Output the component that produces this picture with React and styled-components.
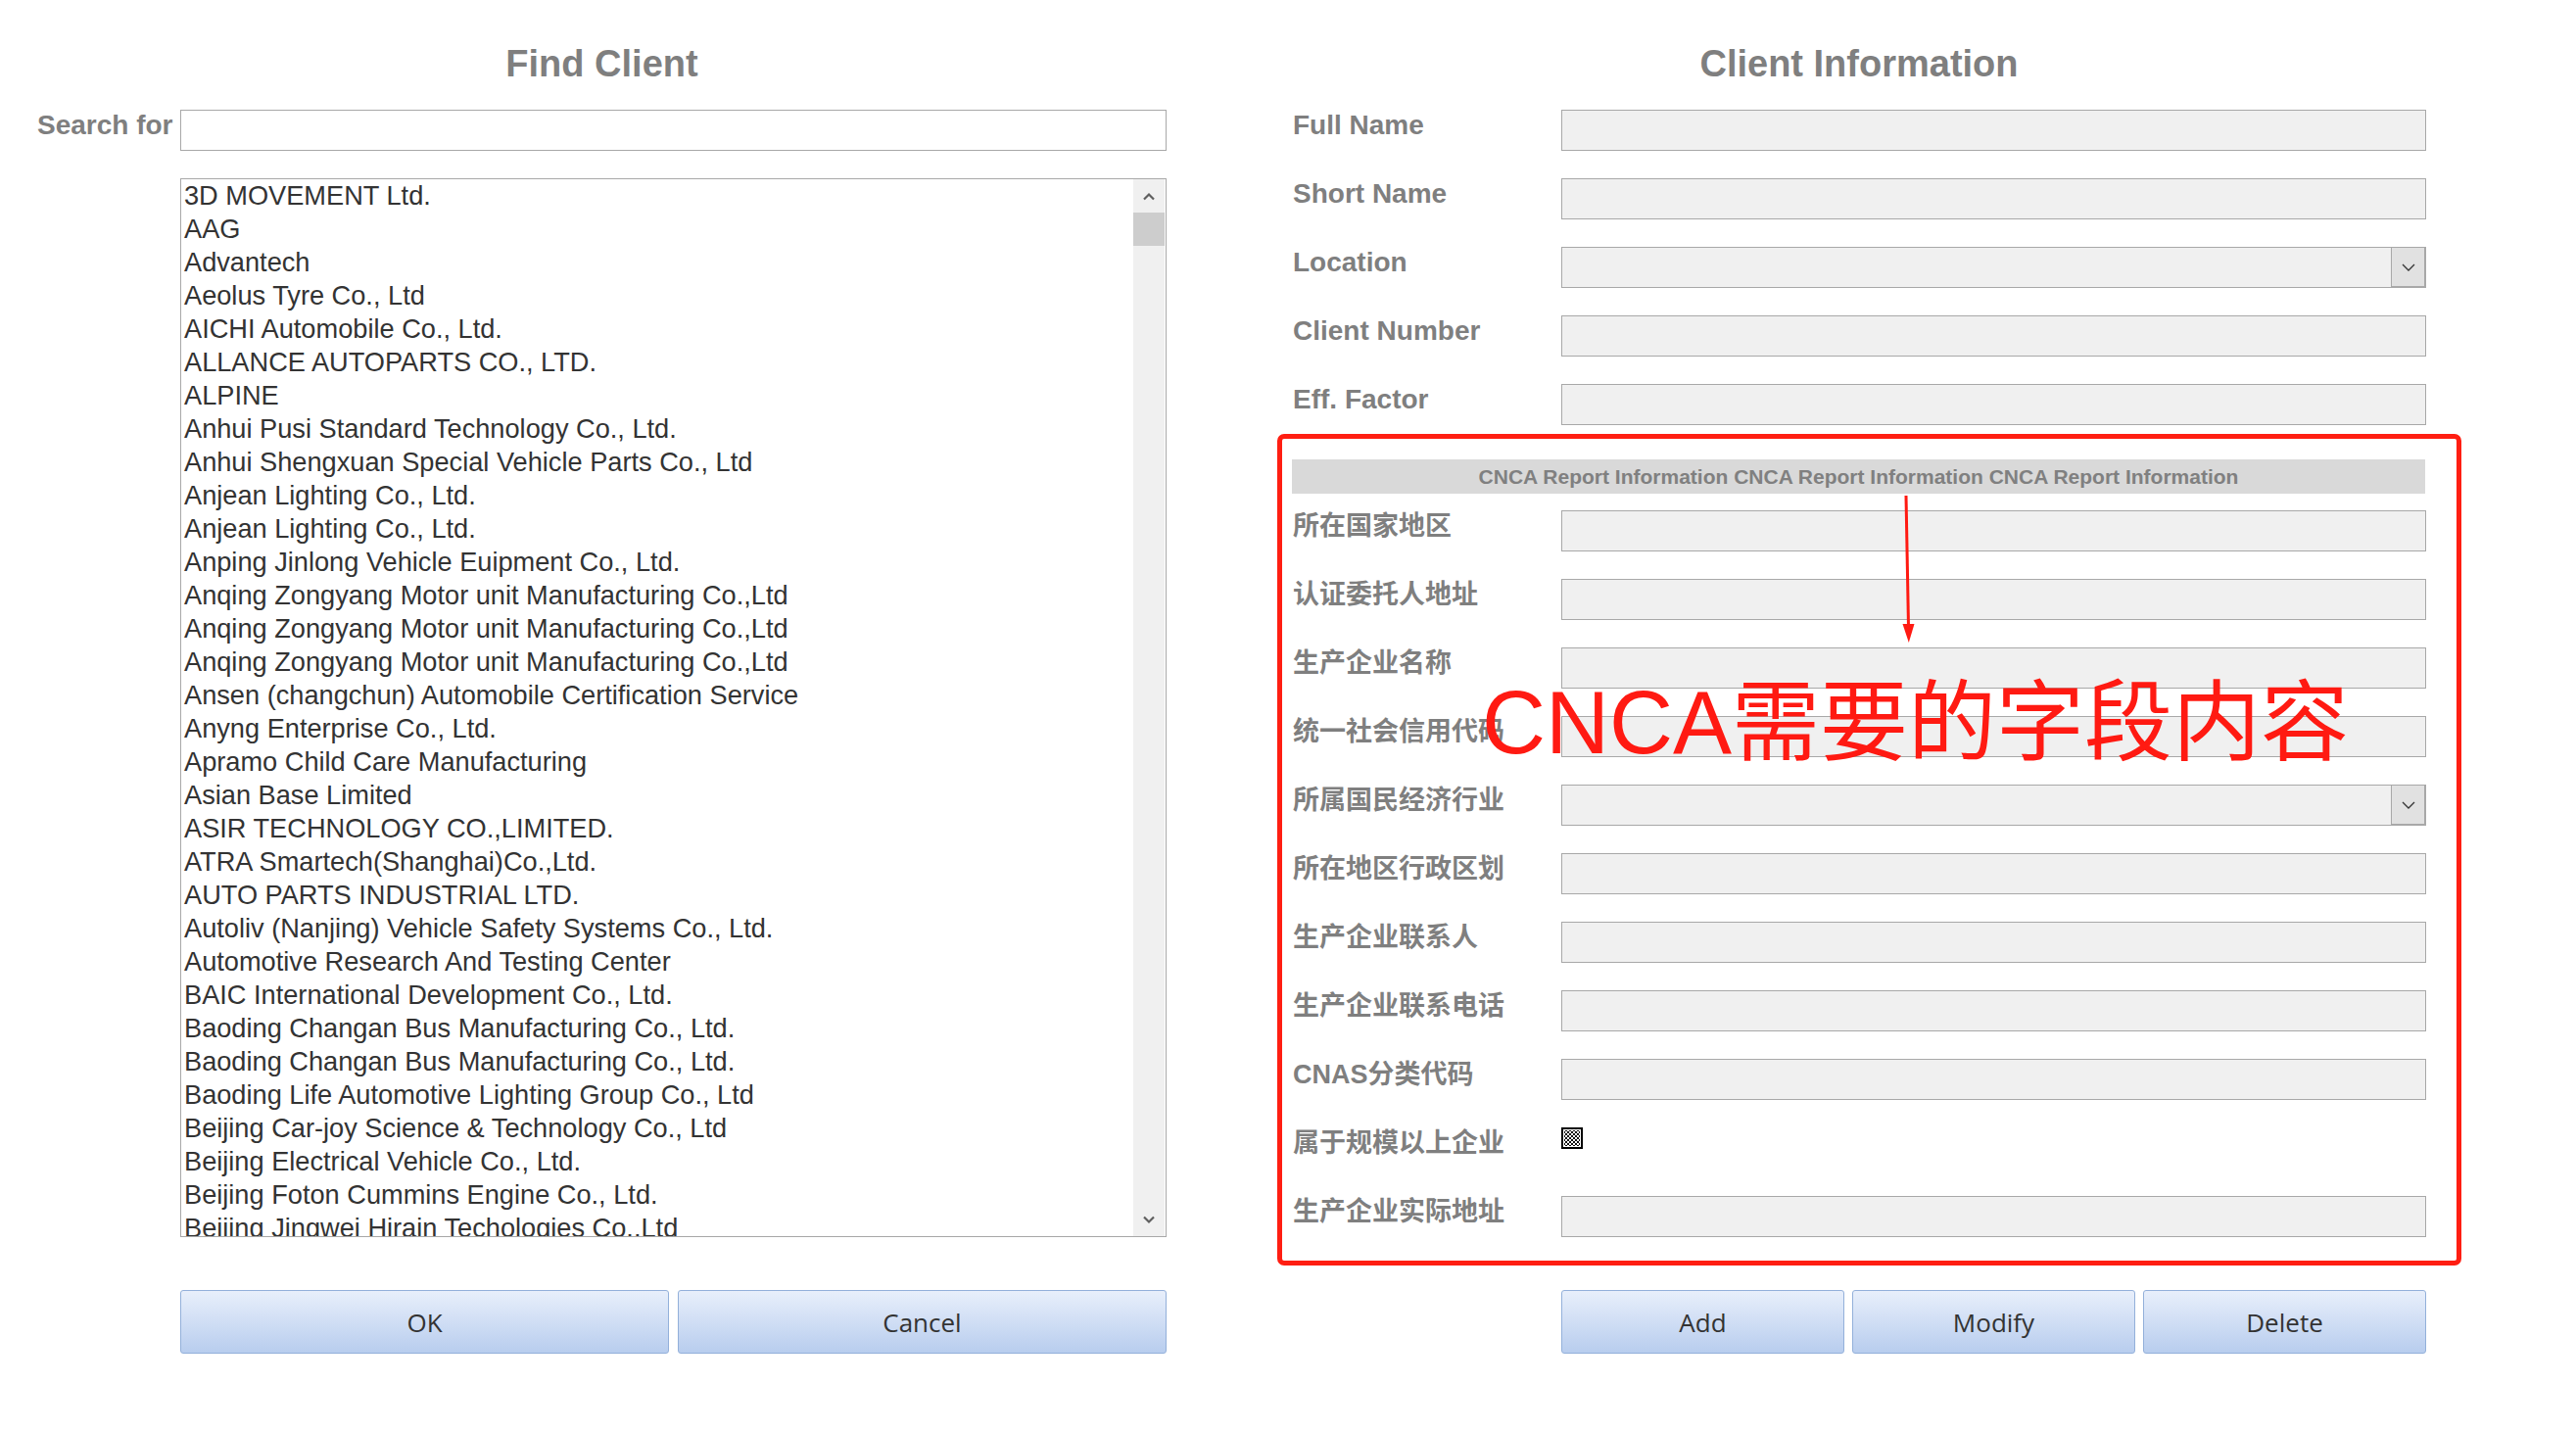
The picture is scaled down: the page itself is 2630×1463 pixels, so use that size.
import React from "react";
import styled, { createGlobalStyle } from "styled-components";

const clients = [
  "3D MOVEMENT Ltd.",
  "AAG",
  "Advantech",
  "Aeolus Tyre Co., Ltd",
  "AICHI Automobile Co., Ltd.",
  "ALLANCE AUTOPARTS CO., LTD.",
  "ALPINE",
  "Anhui Pusi Standard Technology Co., Ltd.",
  "Anhui Shengxuan Special Vehicle Parts Co., Ltd",
  "Anjean Lighting Co., Ltd.",
  "Anjean Lighting Co., Ltd.",
  "Anping Jinlong Vehicle Euipment Co., Ltd.",
  "Anqing Zongyang Motor unit Manufacturing Co.,Ltd",
  "Anqing Zongyang Motor unit Manufacturing Co.,Ltd",
  "Anqing Zongyang Motor unit Manufacturing Co.,Ltd",
  "Ansen (changchun) Automobile Certification Service",
  "Anyng Enterprise Co., Ltd.",
  "Apramo Child Care Manufacturing",
  "Asian Base Limited",
  "ASIR TECHNOLOGY CO.,LIMITED.",
  "ATRA Smartech(Shanghai)Co.,Ltd.",
  "AUTO PARTS INDUSTRIAL LTD.",
  "Autoliv (Nanjing) Vehicle Safety Systems Co., Ltd.",
  "Automotive Research And Testing Center",
  "BAIC International Development Co., Ltd.",
  "Baoding Changan Bus Manufacturing Co., Ltd.",
  "Baoding Changan Bus Manufacturing Co., Ltd.",
  "Baoding Life Automotive Lighting Group Co., Ltd",
  "Beijing Car-joy Science & Technology Co., Ltd",
  "Beijing Electrical Vehicle Co., Ltd.",
  "Beijing Foton Cummins Engine Co., Ltd.",
  "Beijing Jingwei Hirain Techologies Co.,Ltd",
  "Beijing Hyundai Motor Company",
  "Beijing Tianhai Industry Co., Ltd.",
];

const basicFields = [
  { label: "Full Name" },
  { label: "Short Name" },
  { label: "Location", select: true },
  { label: "Client Number" },
  { label: "Eff. Factor" },
];

const cncaFields = [
  { label: "所在国家地区" },
  { label: "认证委托人地址" },
  { label: "生产企业名称" },
  { label: "统一社会信用代码" },
  { label: "所属国民经济行业", select: true },
  { label: "所在地区行政区划" },
  { label: "生产企业联系人" },
  { label: "生产企业联系电话" },
  { label: "CNAS分类代码" },
  { label: "属于规模以上企业", check: true },
  { label: "生产企业实际地址" },
];

export default function App() {
  return (
    <>
      <GlobalStyle />
      <Page>
        <Column $width={1153}>
          <Title>Find Client</Title>
          <SearchRow>
            <SearchLabel>Search for</SearchLabel>
            <SearchInput type="text" />
          </SearchRow>
          <ListBox>
            <ListItems>
              {clients.map((name, i) => (
                <ListItem key={`${name}-${i}`}>{name}</ListItem>
              ))}
            </ListItems>
            <Scrollbar>
              <ScrollArrow>
                <svg width="12" height="9" viewBox="0 0 12 9">
                  <polyline points="1,7.5 6,2.5 11,7.5" fill="none" stroke="#5f5f5f" strokeWidth="2.2" />
                </svg>
              </ScrollArrow>
              <ScrollTrack>
                <ScrollThumb />
              </ScrollTrack>
              <ScrollArrow>
                <svg width="12" height="9" viewBox="0 0 12 9">
                  <polyline points="1,1.5 6,6.5 11,1.5" fill="none" stroke="#5f5f5f" strokeWidth="2.2" />
                </svg>
              </ScrollArrow>
            </Scrollbar>
          </ListBox>
          <ButtonRow $indent={146} $gap={9} $top={54}>
            <Button>OK</Button>
            <Button>Cancel</Button>
          </ButtonRow>
        </Column>

        <Column $width={1158} $left={128}>
          <Title>Client Information</Title>
          <FieldList>
            {basicFields.map(f => (
              <Field key={f.label} {...f} />
            ))}
          </FieldList>
          <CncaSection>
            <SectionHeader>
              CNCA Report Information CNCA Report Information CNCA Report Information
            </SectionHeader>
            <FieldList>
              {cncaFields.map(f => (
                <Field key={f.label} cjk {...f} />
              ))}
            </FieldList>
            <ArrowMark width="20" height="152" viewBox="0 0 20 152">
              <line x1="9" y1="0" x2="11.5" y2="134" stroke="#ff1a12" strokeWidth="3" />
              <polygon points="5.5,131 17.5,131 11.8,150" fill="#ff1a12" />
            </ArrowMark>
            <Annotation>
              <Latin>CNCA</Latin>需要的字段内容
            </Annotation>
          </CncaSection>
          <ButtonRow $indent={275} $gap={8} $top={25}>
            <Button>Add</Button>
            <Button>Modify</Button>
            <Button>Delete</Button>
          </ButtonRow>
        </Column>
      </Page>
    </>
  );
}

function Field({ label, select, check, cjk }) {
  return (
    <FieldRow>
      <FieldLabel $cjk={cjk}>{label}</FieldLabel>
      {check ? (
        <CheckBox />
      ) : select ? (
        <SelectField>
          <SelectButton>
            <svg width="14" height="8" viewBox="0 0 14 8">
              <polyline points="1,1 7,7 13,1" fill="none" stroke="#333" strokeWidth="1.3" />
            </svg>
          </SelectButton>
        </SelectField>
      ) : (
        <TextField type="text" readOnly />
      )}
    </FieldRow>
  );
}

const GlobalStyle = createGlobalStyle`
  html, body {
    margin: 0;
    padding: 0;
    background: #fff;
    overflow: hidden;
  }

  body {
    font-family: "Liberation Sans", Arial, "Noto Sans CJK SC", sans-serif;
  }
`;

const Page = styled.div`
  align-items: flex-start;
  box-sizing: border-box;
  display: flex;
  height: 1463px;
  padding: 43px 0 0 38px;
  width: 2630px;
`;

const Column = styled.div`
  display: flex;
  flex-direction: column;
  flex: none;
  margin-left: ${props => props.$left || 0}px;
  width: ${props => props.$width}px;
`;

const Title = styled.h2`
  color: #7f7f7f;
  font-size: 38px;
  font-weight: bold;
  line-height: 44px;
  margin: 0 0 25px;
  text-align: center;
`;

const SearchRow = styled.div`
  align-items: flex-start;
  display: flex;
`;

const SearchLabel = styled.label`
  color: #7f7f7f;
  font-size: 28px;
  font-weight: bold;
  line-height: 32px;
  margin-right: 11px;
  width: 135px;
  white-space: nowrap;
`;

const SearchInput = styled.input`
  background: #fff;
  border: 1px solid #a8a8a8;
  box-sizing: border-box;
  flex: 1;
  height: 42px;
  margin: 0;
  outline: none;
`;

const ListBox = styled.div`
  background: #fff;
  border: 1px solid #a8a8a8;
  box-sizing: border-box;
  display: flex;
  height: 1081px;
  margin: 28px 0 0 146px;
`;

const ListItems = styled.div`
  flex: 1;
  overflow: hidden;
  padding-left: 3px;
`;

const ListItem = styled.div`
  color: #333;
  font-size: 27.2px;
  line-height: 34px;
  white-space: nowrap;
`;

const Scrollbar = styled.div`
  background: #f0f0f0;
  display: flex;
  flex-direction: column;
  margin-right: 1px;
  width: 32px;
`;

const ScrollArrow = styled.div`
  align-items: center;
  display: flex;
  height: 34px;
  justify-content: center;
`;

const ScrollTrack = styled.div`
  flex: 1;
`;

const ScrollThumb = styled.div`
  background: #cdcdcd;
  height: 34px;
`;

const ButtonRow = styled.div`
  display: flex;
  gap: ${props => props.$gap}px;
  margin: ${props => props.$top}px 0 0 ${props => props.$indent}px;
`;

const Button = styled.button`
  background: linear-gradient(#e8effb, #b8cdee);
  border: 1px solid #93b0da;
  border-radius: 3px;
  color: #333;
  cursor: pointer;
  flex: 1;
  font-family: "Open Sans", "Noto Sans", sans-serif;
  font-size: 26px;
  height: 65px;
  padding: 0;
`;

const FieldList = styled.div`
  display: flex;
  flex-direction: column;
  gap: 28px;
`;

const FieldRow = styled.div`
  align-items: flex-start;
  display: flex;
  height: 42px;
`;

const FieldLabel = styled.label`
  color: #7f7f7f;
  flex: none;
  font-family: "Liberation Sans", Arial, "Noto Sans CJK SC", sans-serif;
  font-size: ${props => (props.$cjk ? 27 : 28)}px;
  font-weight: bold;
  line-height: 32px;
  padding-left: 1px;
  white-space: nowrap;
  width: 274px;
`;

const TextField = styled.input`
  background: #f0f0f0;
  border: 1px solid #a8a8a8;
  box-sizing: border-box;
  flex: 1;
  height: 42px;
  margin: 0;
  min-width: 0;
  outline: none;
`;

const SelectField = styled.div`
  background: #f0f0f0;
  border: 1px solid #a8a8a8;
  box-sizing: border-box;
  display: flex;
  flex: 1;
  height: 42px;
  justify-content: flex-end;
`;

const SelectButton = styled.div`
  align-items: center;
  background: #e1e1e1;
  border-left: 1px solid #a8a8a8;
  box-shadow: inset -1px -1px 0 #a8a8a8;
  display: flex;
  justify-content: center;
  width: 34px;
`;

const CheckBox = styled.div`
  background: repeating-conic-gradient(#111 0 25%, #fff 0 50%) 0 0 / 4px 4px;
  border: 2px solid #000;
  box-shadow: inset 0 0 0 1px #fff;
  box-sizing: border-box;
  height: 22px;
  width: 22px;
`;

const CncaSection = styled.section`
  border: 5px solid #ff1e12;
  border-radius: 7px;
  margin: 9px -36px 0 -15px;
  padding: 21px 31px 24px 10px;
  position: relative;
`;

const SectionHeader = styled.div`
  background: #d9d9d9;
  color: #808080;
  font-size: 21px;
  font-weight: bold;
  height: 35px;
  line-height: 35px;
  margin: 0 1px 17px 0;
  text-align: center;
  white-space: nowrap;
`;

const ArrowMark = styled.svg`
  left: 628px;
  pointer-events: none;
  position: absolute;
  top: 58px;
`;

const Annotation = styled.div`
  color: #ff1a12;
  font-family: "Noto Sans CJK SC", sans-serif;
  font-size: 90px;
  left: 204px;
  line-height: 100px;
  pointer-events: none;
  position: absolute;
  top: 232px;
  white-space: nowrap;
`;

const Latin = styled.span`
  font-family: "Liberation Sans", Arial, sans-serif;
`;
